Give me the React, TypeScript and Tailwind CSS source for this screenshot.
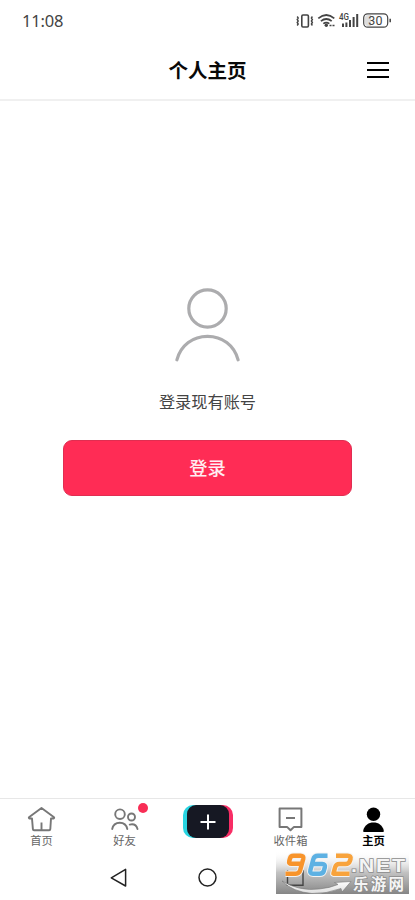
import type { ReactNode } from "react";

const cjk = "font-['Noto_Sans_CJK_SC',sans-serif]";

function StatusBar() {
  return (
    <div className="flex h-[42px] shrink-0 items-center justify-between pl-[22px] pr-[23px] text-[#444]">
      <span className="font-['Noto_Sans',sans-serif] text-[16.5px] leading-none tracking-[-0.2px]">11:08</span>
      <svg width="96" height="18" viewBox="296 12 96 18" fill="none" stroke="#444">
        <rect x="301.8" y="15" width="6.6" height="12" rx="1.2" strokeWidth="1.6" />
        <path d="M297.2 16.5l1 1.5-1 1.5 1 1.5-1 1.5 1 1.5-1 1.5M312.4 16.5l-1 1.5 1 1.5-1 1.5 1 1.5-1 1.5 1 1.5" strokeWidth="1.4" />
        <path d="M318.3 18.3Q326.3 11.7 334.3 18.3M320.9 21.2Q326.3 16.8 331.7 21.2M323.3 23.7Q326.3 21.4 329.3 23.7" strokeWidth="1.7" />
        <circle cx="326.3" cy="25.2" r="1.7" fill="#444" stroke="none" />
        <path d="M329.5 25.5h5" strokeWidth="1.6" strokeDasharray="2 1" />
        <text x="339" y="20.3" fontFamily="Roboto" fontSize="8.5" fontWeight="500" textLength="10" lengthAdjust="spacingAndGlyphs" fill="#444" stroke="none">4G</text>
        <path d="M343 27v-3.5M346.4 27v-4.5M350 27v-7M353.6 27v-10M357.2 27v-13" strokeWidth="2" />
        <rect x="363.7" y="13.8" width="24" height="13.4" rx="4" strokeWidth="1.2" />
        <path d="M368 15h3v11h-3q-3 0-3-3v-5q0-3 3-3" fill="#ddd" stroke="none" />
        <text x="375.4" y="25" textAnchor="middle" fontFamily="Roboto" fontSize="12.5" fill="#444" stroke="none">30</text>
        <path d="M390.2 18.7v3.6" strokeWidth="1.5" />
      </svg>
    </div>
  );
}

function Tab({ label, active, children }: { label: string; active?: boolean; children: ReactNode }) {
  return (
    <div className={`flex flex-1 flex-col items-center pt-[5px] text-[11.3px] leading-[14px] ${active ? "font-bold text-black" : "text-[#666]"}`}>
      <div className="relative h-[29px]">{children}</div>
      <span>{label}</span>
    </div>
  );
}

function Watermark() {
  const nine = "M26 12.8H15.5Q12.5 12.8 13.3 9.8L14 7.3Q14.8 4.7 17.5 4.7H24.5Q28 4.7 27.2 8L24.2 19Q23.3 22.7 19.8 22.7H9.5";
  const six = "M51.5 4.7H42Q38.3 4.7 37.4 8L34.4 19Q33.5 22.7 37 22.7H43.5Q47 22.7 47.8 20L48.8 16.3Q49.6 13 46.2 13H37.5";
  const two = "M60 4.7H71.5Q75.3 4.7 74.5 8L73.8 10.2Q73 13 69.5 13H63.5Q60 13 59.2 16L57.4 22.7H73.5";
  return (
    <svg className="absolute left-[276px] top-[851px]" width="133" height="43" viewBox="0 0 133 43">
      <defs>
        <linearGradient id="shade" x1="0" y1="0" x2="0" y2="1">
          <stop offset="0" stopColor="#fff" stopOpacity="0" />
          <stop offset="0.5" stopColor="#bbb" stopOpacity="0.9" />
          <stop offset="1" stopColor="#858585" />
        </linearGradient>
        <linearGradient id="silver" x1="0" y1="0" x2="0" y2="1">
          <stop offset="0" stopColor="#fff" />
          <stop offset="1" stopColor="#ddd" />
        </linearGradient>
      </defs>
      <rect width="133" height="43" fill="url(#shade)" />
      <path d="M11.5 19v15.3H27V19" fill="none" stroke="#444" strokeWidth="1.4" />
      <path d="M6 30Q23 40.5 43 38Q54 37 62 33.5L58.5 31.5L75 30.5L66 41L65 37.5Q50 43 36 42.5Q17 41 6 30Z" fill="url(#silver)" stroke="#777" strokeWidth="0.6" />
      <g fill="none" stroke="#f3f3f3" strokeWidth="6.4" strokeLinejoin="round">
        <path d={nine} />
        <path d={six} />
        <path d={two} />
      </g>
      <g fill="none" strokeWidth="4.5" strokeLinejoin="round">
        <path stroke="#f8942b" d={nine} />
        <path stroke="#5db1e3" d={six} />
        <path stroke="#f8a33c" d={two} />
      </g>
      <g fill="#f5f5f5" stroke="#8c8c8c" strokeWidth="1.4" paintOrder="stroke" fontWeight="700">
        <text x="75" y="20.5" fontFamily="Liberation Sans" fontSize="18" letterSpacing="1.5" textLength="56" lengthAdjust="spacingAndGlyphs">.NET</text>
        <text x="77" y="39" fontFamily="Noto Sans CJK SC" fontSize="15.5" textLength="51">乐游网</text>
      </g>
    </svg>
  );
}

export default function App() {
  return (
    <div className={`relative flex h-[900px] w-[415px] flex-col overflow-hidden bg-white ${cjk}`}>
      <StatusBar />
      <header className="grid h-[59px] shrink-0 grid-cols-[1fr_auto_1fr] items-center border-b-2 border-[#f0f0f0] pb-[2px] pr-[26px]">
        <span className="w-[26px]" />
        <h1 className="translate-x-[13px] text-[19.5px] font-bold leading-[28px] text-[#080808]">个人主页</h1>
        <div className="flex flex-col items-end gap-[5px] pt-px">
          <span className="h-[2px] w-[22px] bg-black" />
          <span className="h-[2px] w-[22px] bg-black" />
          <span className="h-[2px] w-[22px] bg-black" />
        </div>
      </header>
      <main className="flex flex-1 flex-col items-center pt-[185px]">
        <svg width="69" height="78" viewBox="0 0 69 78" fill="none" stroke="#acacae" strokeWidth="3.2" strokeLinecap="round">
          <circle cx="34.5" cy="22.5" r="18.7" />
          <path d="M3.9 73.8C7.9 59 20 50.3 34.5 50.3S61.1 59 65.1 73.8" />
        </svg>
        <p className="mt-[25px] text-[16.2px] leading-[24px] text-[#444]">登录现有账号</p>
        <button className="mt-[27px] h-[56px] w-[289px] rounded-[9px] border border-[#e02e51] bg-[#ff2c55] pb-[2px] text-[18.3px] font-medium leading-none text-[#ffeef2]">登录</button>
      </main>
      <nav className="flex h-[56px] shrink-0 border-t border-[#e7e7e7]">
        <Tab label="首页">
          <svg width="31" height="29" viewBox="26 804 31 29" fill="none" stroke="#777" strokeWidth="1.9" strokeLinejoin="round">
            <path d="M32 818.5h-2.7q-1-.6 0-1.5l12.2-9 12.2 9q1 .9 0 1.5H51l-.7 10.7q-.1 1-1.1 1H34q-1 0-1.1-1ZM41.5 830v-7.5" />
          </svg>
        </Tab>
        <Tab label="好友">
          <svg width="31" height="29" viewBox="109 804 31 29" fill="none" stroke="#777" strokeWidth="1.9" strokeLinecap="round">
            <circle cx="120" cy="814.2" r="4.8" />
            <circle cx="131.5" cy="817" r="3.5" />
            <path d="M112.2 829C113 825 116 822.7 119.8 822.7S126.5 825 127.3 829M129.7 824.6C133.5 823.7 136.5 825.3 137.5 829" />
          </svg>
          <span className="absolute -right-[8px] -top-px size-[10px] rounded-full bg-[#f82d55]" />
        </Tab>
        <div className="flex flex-1 justify-center pt-[6px]">
          <div className="flex h-[33px] w-[50px] justify-center rounded-[10px] bg-linear-to-r from-[#29d5e2] from-50% to-[#f82d65] to-50%">
            <div className="flex h-full w-[42px] items-center justify-center rounded-[9px] bg-[#161823]">
              <svg width="16" height="16" viewBox="0 0 16 16" stroke="#fff" strokeWidth="2"><path d="M.5 8h15M8 .5v15" /></svg>
            </div>
          </div>
        </div>
        <Tab label="收件箱">
          <svg width="31" height="29" viewBox="275 804 31 29" fill="none" stroke="#777" strokeWidth="2" strokeLinejoin="round">
            <path d="M279.6 808.6h21.8v18.3H294l-3.5 3.4-3.5-3.4h-7.4ZM286 818h9" />
          </svg>
        </Tab>
        <Tab label="主页" active>
          <svg width="31" height="29" viewBox="358 804 31 29" fill="#000">
            <circle cx="373.5" cy="814.3" r="6.7" />
            <path d="M363.7 832Q363 831.8 363.3 830C365 825 368.3 822.4 373.5 822.4S382 825 383.7 830Q384 831.8 383.3 832Z" />
          </svg>
        </Tab>
      </nav>
      <div className="grid h-[46px] shrink-0 grid-cols-[107px_25px_151px_25px] items-start pt-[11px]">
        <span />
        <svg width="24" height="24" viewBox="107 865 24 24" fill="none" stroke="#222" strokeWidth="1.5" strokeLinejoin="round"><path d="M111.3 877.8L125.6 869.4v16.6Z" /></svg>
        <svg width="24" height="24" viewBox="0 0 24 24" fill="none" stroke="#222" strokeWidth="1.5" className="ml-[63px]"><circle cx="12.5" cy="12.5" r="8.5" /></svg>
      </div>
      <Watermark />
    </div>
  );
}
